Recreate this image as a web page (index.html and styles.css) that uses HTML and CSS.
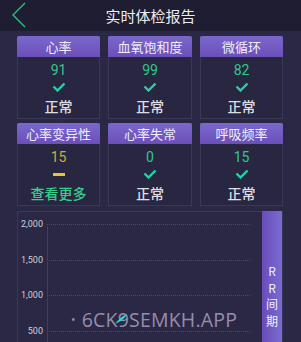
FILE: index.html
```html
<!DOCTYPE html>
<html lang="zh">
<head>
<meta charset="utf-8">
<link rel="stylesheet" href="styles.css">
</head>
<body>
<div class="topbar">
  <svg class="back" width="16" height="26" viewBox="0 0 16 26"><path d="M14 1 L2 13 L14 25" fill="none" stroke="#22c77c" stroke-width="1.4"/></svg>
  <div class="title">实时体检报告</div>
</div>
<div class="grid">
  <div class="card"><div class="chead">心率</div><div class="cbody"><div class="val green">91</div><svg class="check" width="14" height="10" viewBox="0 0 14 10"><path d="M1.5 4.5 L5.5 8.5 L12.5 1.5" fill="none" stroke="#27d0a8" stroke-width="2.4"/></svg><div class="lbl">正常</div></div></div>
  <div class="card"><div class="chead">血氧饱和度</div><div class="cbody"><div class="val green">99</div><svg class="check" width="14" height="10" viewBox="0 0 14 10"><path d="M1.5 4.5 L5.5 8.5 L12.5 1.5" fill="none" stroke="#27d0a8" stroke-width="2.4"/></svg><div class="lbl">正常</div></div></div>
  <div class="card"><div class="chead">微循环</div><div class="cbody"><div class="val green">82</div><svg class="check" width="14" height="10" viewBox="0 0 14 10"><path d="M1.5 4.5 L5.5 8.5 L12.5 1.5" fill="none" stroke="#27d0a8" stroke-width="2.4"/></svg><div class="lbl">正常</div></div></div>
  <div class="card"><div class="chead">心率变异性</div><div class="cbody"><div class="val yellow">15</div><div class="dash"></div><div class="lbl more">查看更多</div></div></div>
  <div class="card"><div class="chead">心率失常</div><div class="cbody"><div class="val green">0</div><svg class="check" width="14" height="10" viewBox="0 0 14 10"><path d="M1.5 4.5 L5.5 8.5 L12.5 1.5" fill="none" stroke="#27d0a8" stroke-width="2.4"/></svg><div class="lbl">正常</div></div></div>
  <div class="card"><div class="chead">呼吸频率</div><div class="cbody"><div class="val green">15</div><svg class="check" width="14" height="10" viewBox="0 0 14 10"><path d="M1.5 4.5 L5.5 8.5 L12.5 1.5" fill="none" stroke="#27d0a8" stroke-width="2.4"/></svg><div class="lbl">正常</div></div></div>
</div>
<div class="chart">
  <div class="plot">
    <div class="row"><span class="ylab">2,000</span><span class="line"></span></div>
    <div class="row"><span class="ylab">1,500</span><span class="line"></span></div>
    <div class="row"><span class="ylab">1,000</span><span class="line"></span></div>
    <div class="row last"><span class="ylab">500</span><span class="line"></span></div>
    <div class="axis"></div>
  </div>
  <div class="side">R<br>R<br>间<br>期</div>
</div>
<div class="watermark"><span class="dot">•</span>6CK9SEMKH.APP
  <svg class="feather" width="14" height="12" viewBox="0 0 14 12"><path d="M1 11 C4 7 8 3 13 1 C11 5 8 8 3 10 Z" fill="#2fd0d8"/></svg>
</div>
</body>
</html>
```
FILE: styles.css
```css
* { box-sizing: border-box; }
body {
  margin: 0;
  background: #2a2844;
  font-family: "Noto Sans CJK SC", "Noto Sans", sans-serif;
  color: #e6e6ee;
  height: 342px;
  overflow: hidden;
  position: relative;
}
.topbar {
  height: 31px;
  background: #1e1d32;
  position: relative;
  display: flex;
  align-items: center;
  justify-content: center;
}
.back { position: absolute; left: 11px; top: 2px; }
.title { font-size: 15px; color: #ececf2; line-height: 31px; }
.grid {
  display: grid;
  grid-template-columns: 83px 84px 83px;
  column-gap: 8px;
  row-gap: 4px;
  padding: 5px 0 0 17px;
}
.card {
  height: 83px;
  border: 1px solid #3a3858;
  border-top: none;
  background: #282641;
  display: flex;
  flex-direction: column;
}
.chead {
  height: 21px;
  margin: 0 -1px;
  background: linear-gradient(#7a68cc, #6b4fb8);
  border-radius: 2px 2px 0 0;
  text-align: center;
  font-size: 13px;
  line-height: 21px;
  color: #eeeef6;
}
.cbody {
  display: flex;
  flex-direction: column;
  align-items: center;
  padding-top: 4px;
}
.val { font-family: "Roboto", "Noto Sans", sans-serif; font-size: 14px; line-height: 18px; }
.green { color: #2fc98a; }
.yellow { color: #c9ae3e; }
.check { margin-top: 3px; display: block; }
.dash { margin-top: 7px; width: 12px; height: 3px; background: #e6c634; }
.lbl { margin-top: 5px; font-size: 14px; line-height: 18px; color: #dedee4; font-weight: 500; }
.dash + .lbl { margin-top: 8px; }
.more { color: #34d08a; }
.chart {
  margin: 5px 0 0 17px;
  width: 266px;
  height: 131px;
  border: 1px solid #3a3858;
  border-bottom: none;
  display: flex;
}
.plot { flex: 1; position: relative; padding-top: 6px; }
.row { display: flex; height: 35.5px; align-items: flex-start; }
.row.last { height: 17px; }
.ylab {
  width: 25px;
  text-align: right;
  font-family: "Roboto", sans-serif;
  font-size: 9px;
  line-height: 12px;
  color: #cfcfdc;
}
.line {
  margin-left: 4px;
  margin-top: 6px;
  width: 203px;
  border-top: 1px dotted #4c4a6c;
}
.axis {
  position: absolute;
  left: 29px;
  top: 14px;
  bottom: 0;
  border-left: 1px solid #403e5e;
}
.side {
  width: 20px;
  margin-top: -1px;
  background: linear-gradient(90deg, #6a4cb9, #7a6bd2);
  color: #f2f2f8;
  font-size: 12px;
  line-height: 16.5px;
  text-align: center;
  padding-top: 52px;
}
.watermark {
  position: absolute;
  left: 71px;
  top: 306px;
  font-family: "Open Sans", sans-serif;
  font-size: 19.5px;
  line-height: 27px;
  color: rgba(180, 168, 200, 0.8);
  letter-spacing: 0.2px;
}
.dot { font-size: 12px; margin-right: 6px; vertical-align: 3px; }
.feather { position: absolute; left: 43px; top: 7px; }
```
